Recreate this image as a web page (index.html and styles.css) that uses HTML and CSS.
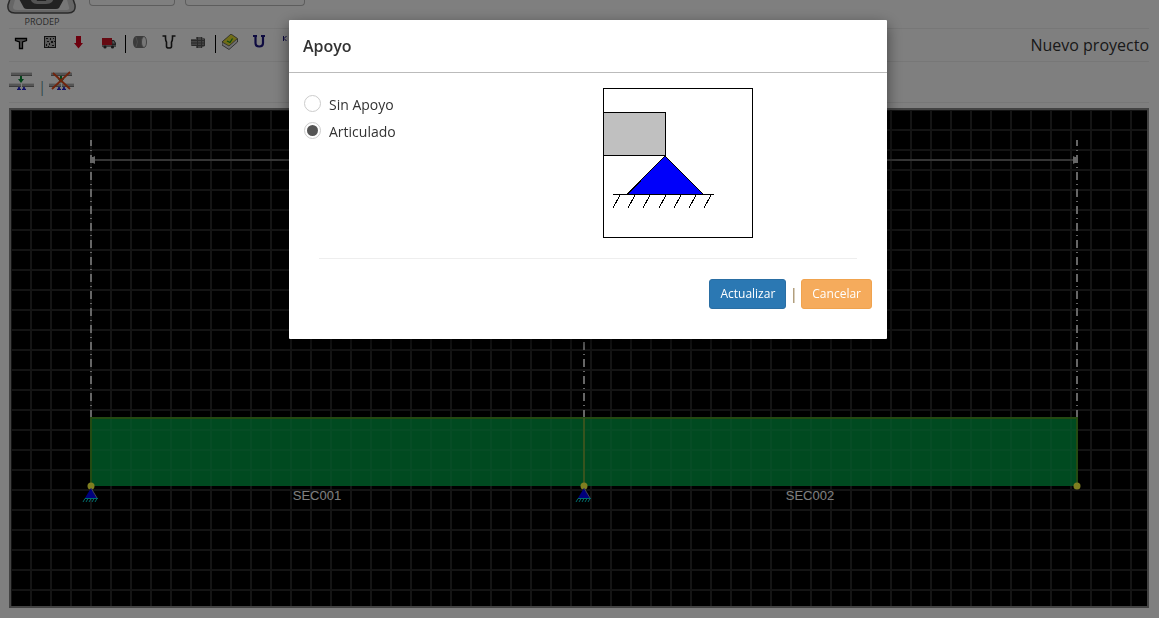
FILE: index.html
```html
<!DOCTYPE html>
<html lang="es">
<head>
<meta charset="utf-8">
<meta name="viewport" content="width=device-width, initial-scale=1">
<title>PRODEP - Nuevo proyecto</title>
<link rel="stylesheet" href="styles.css">
</head>
<body>
<div class="page">
  <header class="top">
    <div class="brand">
      <svg class="brand-logo" width="70" height="14" viewBox="0 0 70 14" aria-hidden="true">
        <path d="M4-4 1 5Q0 13 8 13H61Q69 13 68 5L65-4Z" fill="#ccc" stroke="#555" stroke-width="1.500"/>
        <path d="M9-4 6 7Q6 10 10 10H60Q63 10 62 7L59-4Z" fill="#eee"/>
        <path d="M11-3 17 8Q18 9 20 9H49Q51 9 52 8L58-3Z" fill="#444"/>
        <path d="M22-3 25 2Q27 4 30 4H39Q43 4 45 2L48-3Z" fill="#a8a8a8"/>
        <path d="M29-2H40L39 1H30Z" fill="#444"/>
      </svg>
      <span class="brand-name">PRODEP</span>
    </div>
    <div class="panel panel-small"></div>
    <div class="panel panel-wide"></div>
  </header>

  <div class="bar bar-tools">
    <div class="tools">
      <button class="tool" type="button" aria-label="Sección"><svg viewBox="0 0 16 16"><path d="M2.500 4.500H13.500V6.500L9.500 8V14.500H6.500V8L2.500 6.500Z" fill="#999" stroke="#000" stroke-width="1.300"/></svg></button>
      <button class="tool" type="button" aria-label="Hormigón"><svg viewBox="0 0 16 16"><rect x="2.500" y="2.500" width="11" height="11" fill="#b4b4b4" stroke="#222"/><path d="M4 4h2v1H4zM8 4h1v2H8zM11 4h1v1h-1zM5 7h2v1H5zM9 7h2v2H9zM4 10h1v2H4zM7 9h1v2H7zM10 11h2v1h-2zM6 12h1v1H6zM12 7h1v1h-1z" fill="#222"/></svg></button>
      <button class="tool" type="button" aria-label="Cargas"><svg viewBox="0 0 16 16"><path d="M5 2H10V9H12L7.500 14.500 3 9H5Z" fill="#d8001c"/></svg></button>
      <button class="tool" type="button" aria-label="Vehículos"><svg viewBox="0 0 16 16"><path d="M11 6H14L16 9V13H11Z" fill="#444"/><path d="M12.500 7H13.500L15 9.500H12.500Z" fill="#aaa"/><path d="M2 11H16V13H2Z" fill="#888"/><rect x="2" y="4" width="10" height="7" fill="#cc1424"/><circle cx="5" cy="13" r="1.600" fill="#333"/><circle cx="12.500" cy="13" r="1.600" fill="#333"/></svg></button>
      <span class="divider"></span>
      <button class="tool" type="button" aria-label="Cilindro"><svg viewBox="0 0 16 16"><path d="M4 2H12V14H4Q1 13 1 8T4 2Z" fill="#777"/><path d="M4 3Q7 8 4 13" stroke="#999" fill="none"/><ellipse cx="12" cy="8" rx="2.500" ry="5.500" fill="#eee" stroke="#888"/></svg></button>
      <button class="tool" type="button" aria-label="Estribos"><svg viewBox="0 0 16 16"><path d="M1.500 2H4.500V4Q4.500 7 5.500 8V12.500Q5.500 14 8 14T10.500 12.500V8Q11.500 7 11.500 4V2H14.500" fill="none" stroke="#222" stroke-width="1.600"/></svg></button>
      <button class="tool" type="button" aria-label="Cables"><svg viewBox="0 0 16 16"><path d="M1 5H6V3H11L15 4.500V12L11 14H6V12H1Z" fill="#888"/><path d="M1 6.500H14M1 9H15M2 11.500H14M7.500 3V14M11.500 3V14M14.500 5V12" stroke="#555"/></svg></button>
      <span class="divider"></span>
      <button class="tool" type="button" aria-label="Normativa"><svg viewBox="0 0 16 16"><path d="M0 8 9 1 15.500 5V8L7 15.500 0 11Z" fill="#ddd" stroke="#444" stroke-width=".8"/><path d="M0 8 9 0 15.500 4.500 7 12Z" fill="#e0d830" stroke="#555" stroke-width=".8"/><path d="M5 7 8 8.500 10.500 4.500" fill="none" stroke="#109018" stroke-width="1.200"/></svg></button>
      <button class="tool" type="button" aria-label="Sección U"><svg viewBox="0 0 16 16"><path d="M2 2H6M10 2H14M4.500 2V9Q4.500 12.500 8.250 12.500T12 9V2" fill="none" stroke="#1c1680" stroke-width="2.200"/></svg></button>
      <button class="tool" type="button" aria-label="Constante K"><svg viewBox="0 0 16 16"><path d="M3.500 2V7M6.500 2 4 4.500 6.500 7" fill="none" stroke="#1c1680"/></svg></button>
    </div>
    <h1 class="project">Nuevo proyecto</h1>
  </div>

  <div class="bar bar-supports">
    <button class="support" type="button" aria-label="Insertar apoyo">
      <svg viewBox="0 0 26 22"><path d="M2 2H23V5H2ZM0 13H12V16H0ZM13 13H25V16H13Z" fill="#aaa"/><path d="M2 1.500H23M0 12.500H12M13 12.500H25" stroke="#ddd"/><path d="M2 4.500H23M0 15.500H12M13 15.500H25" stroke="#777"/><path d="M11 5H13V8H15L12 12 9 8H11Z" fill="#078a35"/><path d="M10 16 11 18H9ZM15 16 16 18H14ZM8 18.500H12M13 18.500H17" fill="#22c" stroke="#22c"/></svg>
    </button>
    <span class="pipe">|</span>
    <button class="support" type="button" aria-label="Eliminar apoyo">
      <svg viewBox="0 0 26 22"><path d="M2 2H23V5H2ZM0 13H12V16H0ZM13 13H25V16H13Z" fill="#aaa"/><path d="M2 1.500H23M0 12.500H12M13 12.500H25" stroke="#ddd"/><path d="M2 4.500H23M0 15.500H12M13 15.500H25" stroke="#777"/><path d="M11 5H13V8H15L12 12 9 8H11Z" fill="#078a35"/><path d="M10 16 11 18H9ZM15 16 16 18H14ZM8 18.500H12M13 18.500H17" fill="#22c" stroke="#22c"/><path d="M4 2 21 18M21 1 3 18" stroke="#e04818" stroke-width="1.800"/></svg>
    </button>
  </div>

  <svg class="drawing" viewBox="0 0 1140 500" role="img" aria-label="Viga con secciones SEC001 y SEC002">
    <defs>
      <pattern id="grid" x="1" y="1" width="20" height="20" patternUnits="userSpaceOnUse">
        <path d="M0 1H20M1 0V20" stroke="#fff" stroke-width="2"/>
      </pattern>
      <g id="pin">
        <path d="M0 2 6 12H-6Z" fill="#0000fa"/>
        <path d="M0 2 6 12" stroke="#88a"/>
        <path d="M-6 12.500H7M-6 12.500-8 16M-3 12.500-5 16M0 12.500-2 16M3 12.500 1 16M6 12.500 4 16" fill="none" stroke="#00d8d8"/>
      </g>
    </defs>
    <rect width="1140" height="500" fill="#000"/>
    <rect x="1" y="1" width="1138" height="498" fill="url(#grid)" opacity=".16"/>
    <rect x="1" y="1" width="1138" height="498" fill="none" stroke="#868686" stroke-width="2"/>
    <path d="M82 52H1068" stroke="#6a6a6a" stroke-width="2"/>
    <path d="M82 310V32M575 310V32M1068 310V32" stroke="#ccc" stroke-width="2" stroke-dasharray="8 4 1 4"/>
    <path d="M82 49H84L86 48V56L84 55H82ZM1068 49H1066L1064 48V56L1066 55H1068Z" fill="#ccc"/>
    <rect x="82" y="310" width="986" height="68" fill="#009440"/>
    <rect x="82" y="310" width="986" height="68" fill="url(#grid)" opacity=".05"/>
    <path d="M82 378V310H1068V378" fill="none" stroke="#489424" stroke-width="2"/>
    <path d="M575 310V378" stroke="#6ca83c" stroke-width="2"/>
    <circle cx="82" cy="378" r="3.500" fill="#ffff40"/>
    <circle cx="575" cy="378" r="3.500" fill="#ffff40"/>
    <circle cx="1068" cy="378" r="3.500" fill="#ffff40"/>
    <use href="#pin" x="82" y="378"/>
    <use href="#pin" x="575" y="378"/>
    <text class="section-label" x="308" y="392">SEC001</text>
    <text class="section-label" x="801" y="392">SEC002</text>
  </svg>
</div>

<div class="overlay">
  <form class="dialog" role="dialog" aria-modal="true" aria-labelledby="dialog-title">
    <h2 class="dialog-title" id="dialog-title">Apoyo</h2>
    <div class="dialog-body">
      <div class="columns">
        <div class="options">
          <label class="option"><input class="radio" type="radio" name="apoyo">Sin Apoyo</label>
          <label class="option"><input class="radio" type="radio" name="apoyo" checked>Articulado</label>
        </div>
        <svg class="preview" width="150" height="150" viewBox="0 0 150 150" shape-rendering="crispEdges" role="img" aria-label="Apoyo articulado">
          <rect x=".5" y=".5" width="149" height="149" fill="#fff" stroke="#000"/>
          <rect x=".5" y="24.500" width="62" height="43" fill="#c0c0c0" stroke="#000"/>
          <path d="M62 68 100.500 106.500H24Z" fill="#0000fa" stroke="#000"/>
          <path d="M10 106.500H111" stroke="#000"/>
          <path d="M17 107 10 120M32 107 25 120M47 107 40 120M63 107 56 120M78 107 71 120M93 107 86 120M108 107 101 120" stroke="#000"/>
        </svg>
      </div>
      <div class="actions">
        <button class="btn btn-primary" type="submit">Actualizar</button>
        <span class="actions-pipe">|</span>
        <button class="btn btn-warning" type="button">Cancelar</button>
      </div>
    </div>
  </form>
</div>
</body>
</html>
```

FILE: styles.css
```css
* {
  box-sizing: border-box;
}

body {
  margin: 0;
  background: #fff;
  color: #333;
  font: 14px/20px "Open Sans", sans-serif;
}

button {
  padding: 0;
  border: 0;
  background: none;
  font: inherit;
  cursor: pointer;
}

svg {
  display: block;
}

.page {
  padding: 0 10px 10px 9px;
}

.top {
  display: flex;
  align-items: flex-start;
  height: 28px;
}

.brand {
  width: 70px;
  margin: 0 12px 0 -2px;
}

.brand-name {
  display: block;
  color: #555;
  font-size: 9px;
  line-height: 16px;
  text-align: center;
}

.panel {
  height: 6px;
  border: 1px solid #bbb;
  border-top: 0;
  border-radius: 0 0 4px 4px;
}

.panel-small {
  width: 86px;
  margin-right: 10px;
}

.panel-wide {
  width: 120px;
}

.bar {
  display: flex;
  border-top: 1px solid #eee;
}

.bar-tools {
  justify-content: space-between;
  height: 33px;
}

.tools {
  display: flex;
  gap: 13px;
  padding: 5px 4px;
}

.tool {
  width: 16px;
  height: 16px;
}

.divider {
  width: 1px;
  height: 18px;
  margin: 1px -7px 0 -4px;
  background: #000;
}

.project {
  margin: 0;
  font-size: 16px;
  font-weight: 500;
  line-height: 33px;
}

.bar-supports {
  align-items: flex-start;
  height: 42px;
  margin-bottom: 5px;
  padding-top: 9px;
  border-bottom: 1px solid #eee;
}

.support {
  width: 26px;
  height: 22px;
}

.pipe {
  width: 14px;
  padding-top: 6px;
  color: #5b8f93;
  text-align: center;
}

.drawing {
  width: 100%;
  height: auto;
}

.section-label {
  fill: #fff;
  font: 13px "Liberation Sans", sans-serif;
  text-anchor: middle;
}

.overlay {
  position: fixed;
  inset: 0;
  padding: 20px 0 0 17px;
  background: rgba(0, 0, 0, 0.5);
}

.dialog {
  max-width: 598px;
  margin: 0 auto;
  border-radius: 1px;
  background: #fff;
  box-shadow: 0 5px 15px rgba(0, 0, 0, 0.5);
}

.dialog-title {
  margin: 0;
  padding: 15px 15px 15px 14px;
  border-bottom: 1px solid #bbb;
  font-size: 16px;
  font-weight: 600;
  line-height: 22px;
}

.dialog-body {
  padding: 15px 15px 30px;
}

.columns {
  display: grid;
  grid-template-columns: 1fr 1fr;
  column-gap: 30px;
  margin-bottom: 20px;
}

.options {
  padding-top: 6px;
}

.option {
  display: flex;
  align-items: flex-start;
  gap: 8px;
  height: 27px;
  line-height: 22px;
}

.radio {
  width: 17px;
  height: 17px;
  margin: 1px 0 0;
  border: 1px solid #ccc;
  border-radius: 50%;
  background: #fff;
  appearance: none;
}

.radio:checked {
  padding: 2px;
  background: #555 content-box;
}

.actions {
  display: flex;
  justify-content: flex-end;
  align-items: center;
  position: relative;
  padding-top: 21px;
}

.actions::before {
  content: "";
  position: absolute;
  top: 0;
  left: 15px;
  right: 15px;
  border-top: 1px solid #eee;
}

.btn {
  height: 30px;
  padding: 0 10px;
  border: 1px solid;
  border-radius: 3px;
  color: #fff;
  font-size: 12px;
}

.btn-primary {
  border-color: #2a6ea3;
  background: #2b78b3;
}

.btn-warning {
  border-color: #f0a34e;
  background: #f5ab5c;
}

.actions-pipe {
  width: 15px;
  color: #8a6d3b;
  text-align: center;
}
```
